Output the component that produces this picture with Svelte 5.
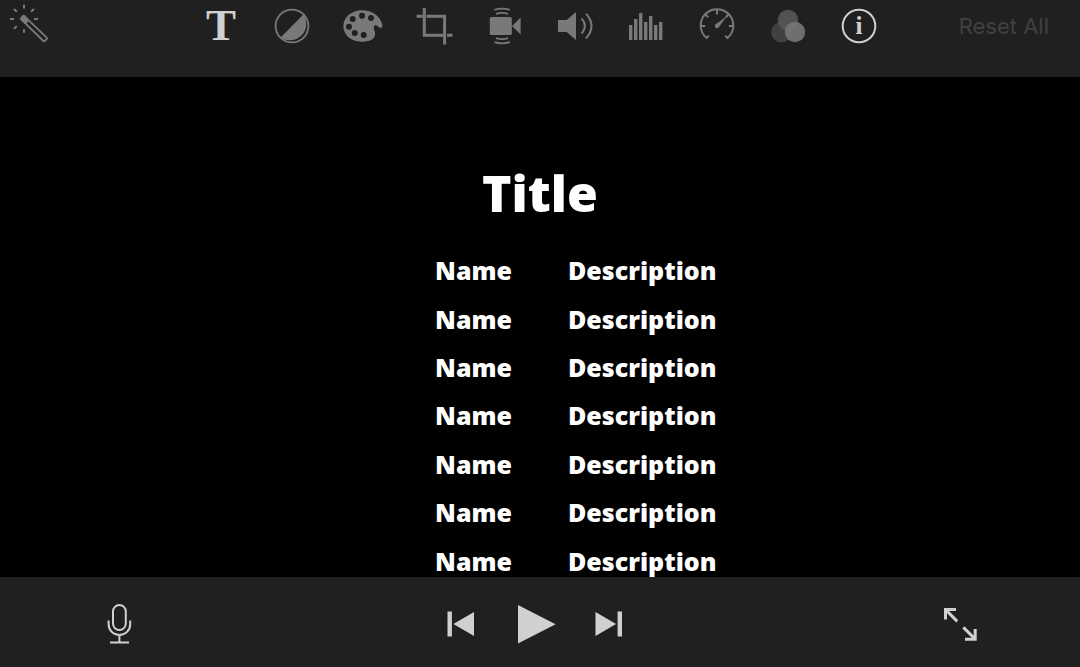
<script>
  const rows = Array.from({ length: 7 }, () => ({ name: 'Name', description: 'Description' }))

  const bars = [
    [3, 21], [8, 15], [13, 9], [18, 18], [23, 12], [28, 21], [33, 18]
  ]

  const holes = [
    [9.7, 15], [19, 11.7], [28, 14], [6, 22.7], [11.7, 29], [20.7, 31]
  ]

  let tab = $state('info')
  let playing = $state(false)
</script>

<main>
  <header>
    <button aria-label="Enhance">
      <svg viewBox="0 0 40 44">
        <path class="line" stroke-width="2" d="M15 .8v3.6M15 25.2v3.6M1 15h4M25 15h4M5 5l2.8 2.8M24.9 5l-2.8 2.8M5 24.9l2.8-2.8" />
        <g transform="translate(14.5 14.5) rotate(44)">
          <rect class="line" stroke-width="1.8" x="-2" y="-2.3" width="33" height="4.6" rx="1" />
          <rect x="-2.5" y="-3" width="8" height="6" rx="1" />
        </g>
      </svg>
    </button>

    <nav>
      <button class:active={tab === 'info'} aria-label="Titles">
        <svg viewBox="0 0 40 44"><text class="glyph" x="20" y="36" font-size="45">T</text></svg>
      </button>
      <button aria-label="Color balance">
        <svg viewBox="0 0 40 44">
          <circle class="line" stroke-width="1.8" cx="20" cy="22" r="16.4" />
          <path d="M8.6 33.4L31.4 10.6A16.4 16.4 0 0 1 8.6 33.4z" />
        </svg>
      </button>
      <button aria-label="Color correction">
        <svg viewBox="0 0 40 44">
          <path d="M19 6.3C29 6.3 37.4 12 39.2 20.5C39.8 23.5 38.6 24.6 36.6 23.6C34.8 22.6 33.6 21 32 21.4C30.2 22 30.8 24.5 31.6 27C33 31.5 31.6 34.2 28 36C25.4 37.3 22 37.8 18.5 37.7C8 37.3 .4 31 .4 22.2C.4 13.2 8.6 6.3 19 6.3z" />
          {#each holes as [x, y]}
            <circle class="hole" cx={x} cy={y} r="3" />
          {/each}
        </svg>
      </button>
      <button aria-label="Crop">
        <svg viewBox="0 0 40 44">
          <path class="line" stroke-width="3" d="M10.3 4v27.3H29M2.6 12.3h6M12.5 12.3h18.1v28.2M33 31.3h5.5" />
        </svg>
      </button>
      <button aria-label="Stabilization">
        <svg viewBox="0 0 40 44">
          <rect x="5.8" y="13" width="22" height="18" rx="1.6" />
          <path d="M28 22l8.6-8.4v17z" />
          <path class="line" stroke-width="1.8" d="M10.5 5.8q7.6-2.4 15.3 0M12 9.8q6-1.8 12 0M10.5 38.2q7.6 2.4 15.3 0M12 34.2q6 1.8 12 0" />
        </svg>
      </button>
      <button aria-label="Volume">
        <svg viewBox="0 0 40 44">
          <path d="M3 16h8.7L21 8v28l-9.3-8H3z" />
          <path class="line" stroke-width="2" d="M26.6 14.4q6.6 7.6 0 15.2M31 9.6q11 12.4 0 24.8" />
        </svg>
      </button>
      <button aria-label="Noise reduction">
        <svg viewBox="0 0 40 44">
          {#each bars as [x, y]}
            <rect {x} {y} width="3.4" height={36 - y} />
          {/each}
        </svg>
      </button>
      <button aria-label="Speed">
        <svg viewBox="0 0 40 44">
          <path class="line" stroke-width="2" d="M11.8 31.8L9.6 34A16.3 16.3 0 1 1 30.4 34L28.2 31.8" />
          <path class="line" stroke-width="2" d="M20 6v4.4M4 22h4.2M31.8 22H36M8.7 10.7l2.6 2.6M31.3 10.7l-2.6 2.6" />
          <path d="M18.4 20.6L29.8 12.2L21.6 23.4z" />
          <circle cx="20" cy="22" r="2.2" />
        </svg>
      </button>
      <button aria-label="Filters">
        <svg viewBox="0 0 40 44">
          <circle cx="13.3" cy="28.3" r="10.2" fill="#414141" />
          <circle cx="20" cy="16" r="10.3" fill="#585858" opacity=".9" />
          <circle cx="27" cy="28" r="10.2" fill="#777" opacity=".9" />
        </svg>
      </button>
      <button class:active={tab === 'info'} aria-label="Info" onclick={() => (tab = 'info')}>
        <svg viewBox="0 0 40 44">
          <circle class="line" stroke-width="2" cx="20" cy="22" r="16.3" />
          <text class="glyph" x="20" y="30" font-size="25">i</text>
        </svg>
      </button>
    </nav>

    <button class="reset" disabled>Reset All</button>
  </header>

  <section>
    <h1>Title</h1>
    <table>
      <tbody>
        {#each rows as row}
          <tr>
            <td>{row.name}</td>
            <td>{row.description}</td>
          </tr>
        {/each}
      </tbody>
    </table>
  </section>

  <footer>
    <button aria-label="Record voiceover">
      <svg viewBox="0 0 40 44">
        <rect class="line" stroke-width="2" x="14" y="3" width="12.8" height="25" rx="6.4" />
        <path class="line" stroke-width="2" d="M9.6 18.6v3.6a10.8 10.8 0 0 0 21.6 0v-3.6M20.4 33v7.4M11 40.6h19" />
      </svg>
    </button>

    <div class="transport">
      <button aria-label="Previous">
        <svg class="skip" viewBox="0 0 28 26"><path d="M.5 .5h4.4v25H.5zM6.4 13L27 1v24z" /></svg>
      </button>
      <button aria-label="Play" aria-pressed={playing} onclick={() => (playing = !playing)}>
        <svg class="play" viewBox="0 0 40 40"><path d="M3 1L40.6 20.2L3 39.4z" /></svg>
      </button>
      <button aria-label="Next">
        <svg class="skip" viewBox="0 0 28 26"><path d="M.5 1v24l20.6-12zM22.6 .5H27v25h-4.4z" /></svg>
      </button>
    </div>

    <button aria-label="Full screen">
      <svg viewBox="0 0 40 44">
        <path class="line" stroke-width="3" d="M5.5 17.6V7.5H16M6 8l11.2 11.4M25 37.2h10.2V27M23.4 25.4L34.8 36.8" />
      </svg>
    </button>
  </footer>
</main>

<style>
  :global(body) {
    margin: 0;
    background: #000;
  }

  main {
    display: flex;
    flex-direction: column;
    height: 100vh;
    color: #fff;
    font-family: Inter, 'Liberation Sans', sans-serif;
  }

  header {
    display: flex;
    align-items: flex-start;
    padding: 4px 31px 29px 9px;
    background: #202020;
    color: #797979;
  }

  nav {
    flex: 1;
    display: flex;
    justify-content: space-between;
    margin: 0 80px 0 152px;
  }

  button {
    display: block;
    padding: 0;
    border: none;
    background: none;
    color: inherit;
    font-family: inherit;
    cursor: pointer;
  }

  svg {
    display: block;
    width: 40px;
    height: 44px;
    overflow: visible;
    fill: currentColor;
  }

  .line {
    fill: none;
    stroke: currentColor;
  }

  .hole {
    fill: #202020;
  }

  .glyph {
    font-family: 'Liberation Serif', serif;
    font-weight: bold;
    text-anchor: middle;
  }

  .active {
    color: #d0d0d0;
  }

  .reset {
    color: #404040;
    font-size: 22px;
    line-height: 44px;
    cursor: default;
  }

  section {
    flex: 1;
    min-height: 0;
    overflow: hidden;
    font-family: 'Gill Sans', 'Open Sans', sans-serif;
    font-weight: 800;
  }

  h1 {
    margin: 84px 0 21px;
    font-size: 50px;
    font-weight: 800;
    line-height: 64px;
    text-align: center;
  }

  table {
    width: 100%;
    height: 339px;
    table-layout: fixed;
    border-collapse: collapse;
    font-size: 25px;
    line-height: 32px;
  }

  td {
    padding: 0 28px;
  }

  td:first-child {
    text-align: right;
  }

  footer {
    display: flex;
    justify-content: space-between;
    align-items: center;
    padding: 25px 100px 21px 99px;
    background: #202020;
    color: #d0d0d0;
  }

  .transport {
    display: flex;
    align-items: center;
    gap: 40px;
    padding-right: 10px;
  }

  .skip {
    width: 28px;
    height: 26px;
  }

  .play {
    width: 40px;
    height: 40px;
  }
</style>
